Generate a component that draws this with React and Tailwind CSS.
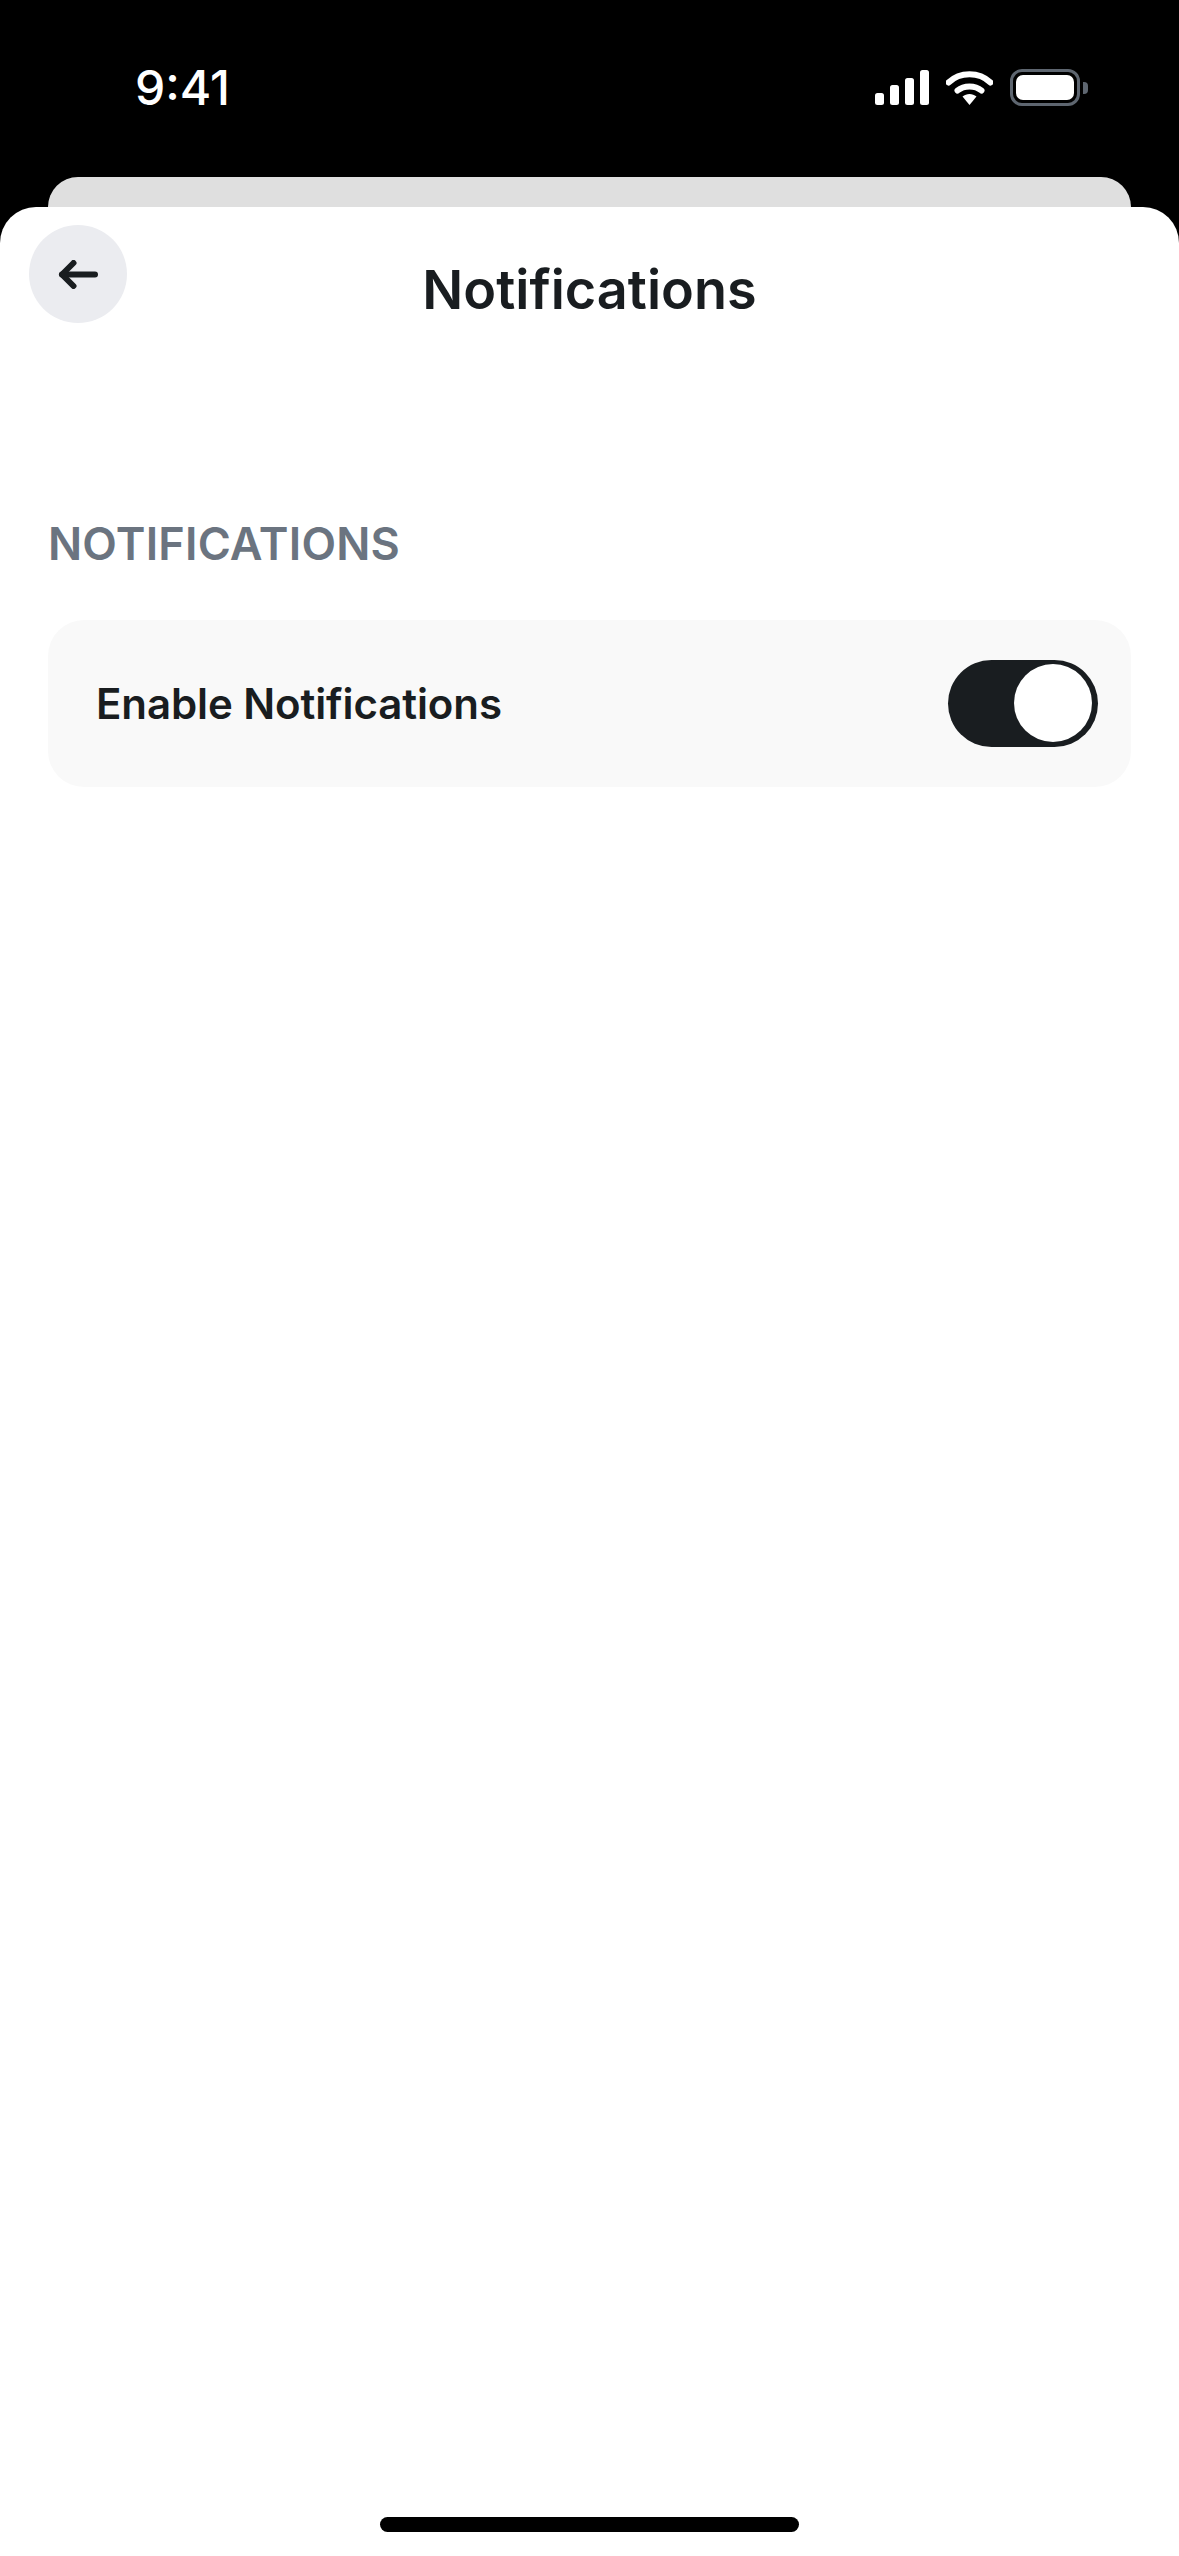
function SignalIcon() {
  return (
    <svg width="54" height="35" viewBox="0 0 54 35" fill="#fff">
      <rect x="0" y="23" width="9" height="12" rx="2.5" />
      <rect x="15" y="15" width="9" height="20" rx="2.5" />
      <rect x="30" y="8" width="9" height="27" rx="2.5" />
      <rect x="45" y="0" width="9" height="35" rx="2.5" />
    </svg>
  );
}

function WifiIcon() {
  return (
    <svg width="47" height="35" viewBox="0 0 47 35" fill="none">
      <path d="M2.5 12.5C14 1.5 33 1.5 44.5 12.5" stroke="#fff" strokeWidth="6" strokeLinecap="round" />
      <path d="M11.5 20.5C18 15 29 15 35.5 20.5" stroke="#fff" strokeWidth="6" strokeLinecap="round" />
      <path d="M16.5 26.5C20.5 23 26.5 23 30.5 26.5L23.5 35Z" fill="#fff" />
    </svg>
  );
}

function BatteryIcon() {
  return (
    <div className="flex items-center">
      <div className="w-[70px] h-[37px] rounded-[12px] border-[3px] border-[#5e6670] p-[3px]">
        <div className="w-full h-full rounded-[7px] bg-white" />
      </div>
      <div className="w-[5px] h-[12px] ml-[3px] rounded-r-[4px] bg-[#5e6670]" />
    </div>
  );
}

function BackArrow() {
  return (
    <svg width="40" height="29" viewBox="0 0 40 29" fill="none" stroke="#191d20" strokeWidth="6" strokeLinecap="round" strokeLinejoin="round">
      <path d="M37 14.5H4" />
      <path d="M15.5 3L4 14.5L15.5 26" />
    </svg>
  );
}

export default function App() {
  return (
    <div className="w-[1179px] h-[2556px] bg-black flex flex-col overflow-hidden font-['Inter',sans-serif]">
      <div className="h-[177px] pl-[135px] pr-[91px] pt-[59px] flex items-start justify-between">
        <span className="text-white text-[48px] leading-[57px] font-medium">9:41</span>
        <div className="flex items-center pt-[10px]">
          <SignalIcon />
          <div className="ml-[17px]">
            <WifiIcon />
          </div>
          <div className="ml-[17px]">
            <BatteryIcon />
          </div>
        </div>
      </div>

      <div className="mx-[48px] h-[30px] rounded-t-[30px] bg-[#dfdfdf]" />

      <div className="flex-1 flex flex-col bg-white rounded-t-[36px]">
        <div className="grid grid-cols-[98px_1fr_98px] px-[29px] pt-[18px]">
          <button className="w-[98px] h-[98px] rounded-full bg-[#ebecf0] flex items-center justify-center">
            <BackArrow />
          </button>
          <h1 className="pt-[35px] text-center text-[54px] leading-[60px] font-semibold text-[#191d20]">Notifications</h1>
        </div>

        <div className="flex-1 flex flex-col px-[48px] pt-[196px]">
          <h2 className="text-[45px] leading-[50px] font-semibold tracking-[0.2px] text-[#6b7480]">NOTIFICATIONS</h2>
          <div className="mt-[51px] h-[167px] rounded-[36px] bg-[#f9f9f9] pl-[48px] pr-[33px] flex items-center justify-between">
            <span className="text-[42px] leading-[50px] font-semibold tracking-[-0.1px] text-[#191d20]">Enable Notifications</span>
            <div className="w-[150px] h-[87px] rounded-full bg-[#191d20] p-[4px] pr-[6px] flex justify-end">
              <div className="w-[78px] h-[78px] rounded-full bg-white" />
            </div>
          </div>

          <div className="mt-auto mb-[24px] mx-[332px] h-[15px] rounded-full bg-black" />
        </div>
      </div>
    </div>
  );
}
